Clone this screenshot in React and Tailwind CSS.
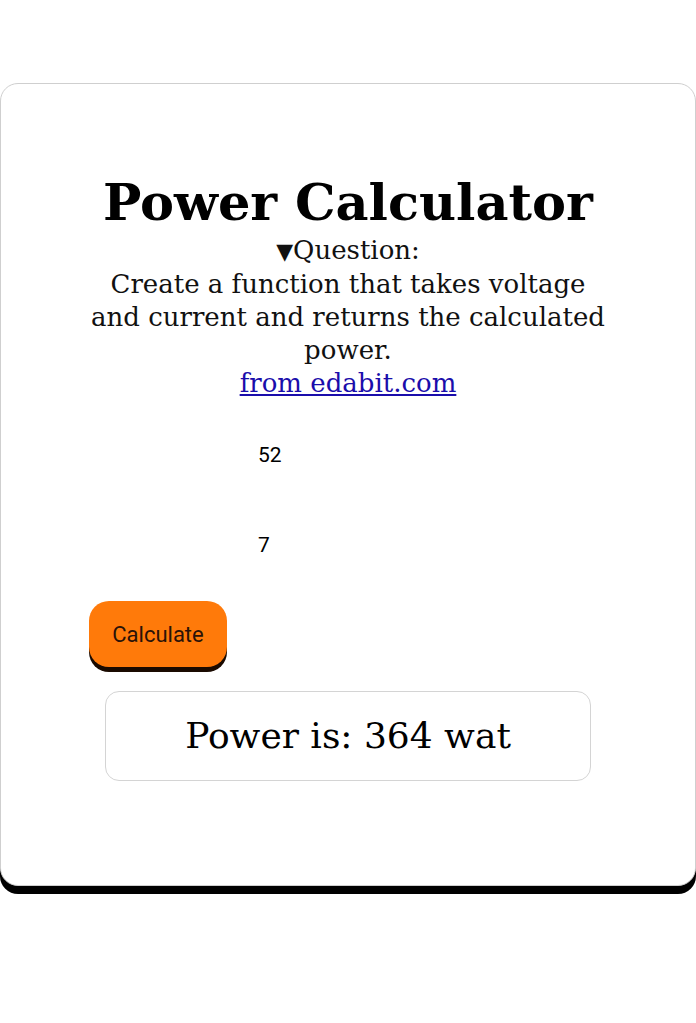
import { useState } from 'react'

const serif = { fontFamily: '"DejaVu Serif", "Liberation Serif", serif' }

export default function App() {
  const [voltage, setVoltage] = useState('52')
  const [current, setCurrent] = useState('7')
  const [power, setPower] = useState(364)

  return (
    <div className="min-h-screen bg-white pt-[83px]">
      <div className="mx-0 rounded-[18px] border border-[#cfcfcf] bg-white pt-[86px] pb-[104px] shadow-[0_8px_0_#000]" style={serif}>
        <h1 className="text-center text-[51px] font-bold leading-[64px] text-black">Power Calculator</h1>
        <div className="mx-auto w-[520px] text-center text-[26px] leading-[33px] text-[#111]">
          <div><span className="text-[22px]">▼</span>Question:</div>
          <p>Create a function that takes voltage and current and returns the calculated power.</p>
          <a href="#" className="text-[#1a0dab] underline">from edabit.com</a>
        </div>

        <div className="mt-[40px] flex flex-col items-center gap-[58px]" style={{ fontFamily: 'Roboto, sans-serif' }}>
          <input value={voltage} onChange={e => setVoltage(e.target.value)} className="w-[180px] bg-transparent text-[21px] text-black outline-none" />
          <input value={current} onChange={e => setCurrent(e.target.value)} className="w-[180px] bg-transparent text-[21px] text-black outline-none" />
        </div>

        <div className="mt-[40px] pl-[88px]">
          <button
            onClick={() => setPower(Number(voltage) * Number(current))}
            className="h-[66px] w-[138px] rounded-[20px] bg-[#ff7a0a] text-[22px] text-[#2a1208] shadow-[0_5px_0_#1a0a00]"
            style={{ fontFamily: 'Roboto, sans-serif' }}
          >
            Calculate
          </button>
        </div>

        <div className="mx-auto mt-[24px] flex h-[90px] w-[486px] items-center justify-center rounded-[14px] border border-[#d4d4d4] text-[36px] text-black">
          Power is: {power} wat
        </div>
      </div>
    </div>
  )
}
